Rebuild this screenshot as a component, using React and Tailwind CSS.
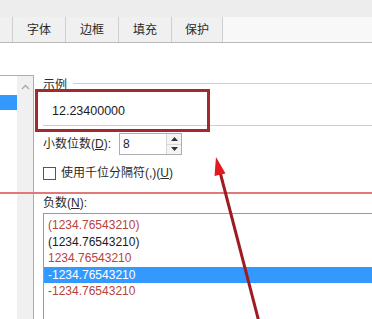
import React from "react";

const font = { fontFamily: '"Liberation Sans", "Noto Sans CJK SC", sans-serif' };

const tabs = ["字体", "边框", "填充", "保护"];

const negatives = [
  { text: "(1234.76543210)", color: "text-[#b8423c]" },
  { text: "(1234.76543210)", color: "text-[#1c1c1c]" },
  { text: "1234.76543210", color: "text-[#b8423c]" },
  { text: "-1234.76543210", color: "text-white", selected: true },
  { text: "-1234.76543210", color: "text-[#b8423c]" },
];

export default function App() {
  return (
    <div className="relative w-[372px] h-[319px] overflow-hidden bg-white text-[12px] text-[#2b2b2b]" style={font}>
      {/* window top strip */}
      <div className="h-[17px] bg-[#ededed]" />

      {/* tab strip */}
      <div className="flex h-[26px] bg-[#f8f8f8] border-b border-[#b9b9b9]">
        <div className="w-[13px] bg-[#f0f0f0] border-r border-[#cfcfcf]" />
        {tabs.map((t, i) => (
          <div
            key={t}
            className={`flex items-center justify-center bg-[#f0f0f0] border-r border-[#cfcfcf] ${i === 3 ? "w-[51px]" : "w-[53px]"}`}
          >
            {t}
          </div>
        ))}
      </div>

      <div className="flex">
        {/* category list (cut off) */}
        <div className="mt-[32px] w-[34px] h-[300px] flex border-t border-r border-[#abadb3]">
          <div className="flex-1 pt-[19px]">
            <div className="h-[15px] bg-[#3399ff]" />
          </div>
          <div className="w-[16px] bg-[#f0f0f0] flex justify-center pt-[8px]">
            <svg width="9" height="6" viewBox="0 0 9 6">
              <path d="M1 5 L4.5 1.5 L8 5" fill="none" stroke="#a8a8a8" strokeWidth="1.3" />
            </svg>
          </div>
        </div>

        <div className="flex-1 pl-[9px] pt-[35px]">
          {/* sample group */}
          <div className="flex items-center h-[14px] gap-[6px]">
            <span>示例</span>
            <div className="flex-1 h-px bg-[#cfcfcf] -mt-[3px]" />
          </div>
          <div className="h-[34px] flex items-center pt-[6px] pl-[9px] border-b border-[#cfcfcf] text-[#1c1c1c] text-[12.5px]">
            12.23400000
          </div>

          {/* decimal places */}
          <div className="flex items-center mt-[7px]">
            <span className="w-[76px]">
              小数位数(<span className="underline">D</span>):
            </span>
            <div className="flex w-[63px] h-[22px] border border-[#abadb3] bg-white">
              <div className="flex-1 flex items-center pl-[3px] text-[#1c1c1c]">8</div>
              <div className="w-[15px] flex flex-col border-l border-[#d6d6d6]">
                <div className="flex-1 flex items-center justify-center bg-[#f4f4f4] border-b border-[#d6d6d6]">
                  <svg width="7" height="4" viewBox="0 0 7 4"><path d="M0 4 L3.5 0 L7 4Z" fill="#333" /></svg>
                </div>
                <div className="flex-1 flex items-center justify-center bg-[#f4f4f4]">
                  <svg width="7" height="4" viewBox="0 0 7 4"><path d="M0 0 L3.5 4 L7 0Z" fill="#333" /></svg>
                </div>
              </div>
            </div>
          </div>

          {/* thousands separator */}
          <div className="flex items-center gap-[5px] mt-[11px] h-[14px]">
            <div className="w-[13px] h-[13px] border border-[#555] bg-white" />
            <span>
              使用千位分隔符(,)(<span className="underline">U</span>)
            </span>
          </div>

          {/* negative numbers */}
          <div className="mt-[15px] h-[16px] flex items-center">
            负数(<span className="underline">N</span>):
          </div>
          <div className="mt-[2px] h-[120px] border-t border-l border-[#9a9a9a] pt-[3px]">
            {negatives.map((n, i) => (
              <div
                key={i}
                className={`h-[16.5px] flex items-center pl-[4px] ${n.color} ${n.selected ? "bg-[#3399ff]" : ""}`}
              >
                {n.text}
              </div>
            ))}
          </div>
        </div>
      </div>

      {/* annotations */}
      <div className="absolute left-[35px] top-[89px] w-[175px] h-[43px] border-[3px] border-[#a32a2c]" />
      <div className="absolute left-0 top-[192px] w-full h-[2px] bg-[#e07a7a]" />
      <svg className="absolute left-0 top-0" width="372" height="319" viewBox="0 0 372 319">
        <line x1="259" y1="322" x2="219.5" y2="170" stroke="#9e1b22" strokeWidth="3" />
        <polygon points="216,157 225.5,173.5 214.5,176" fill="#e3191f" />
      </svg>
    </div>
  );
}
